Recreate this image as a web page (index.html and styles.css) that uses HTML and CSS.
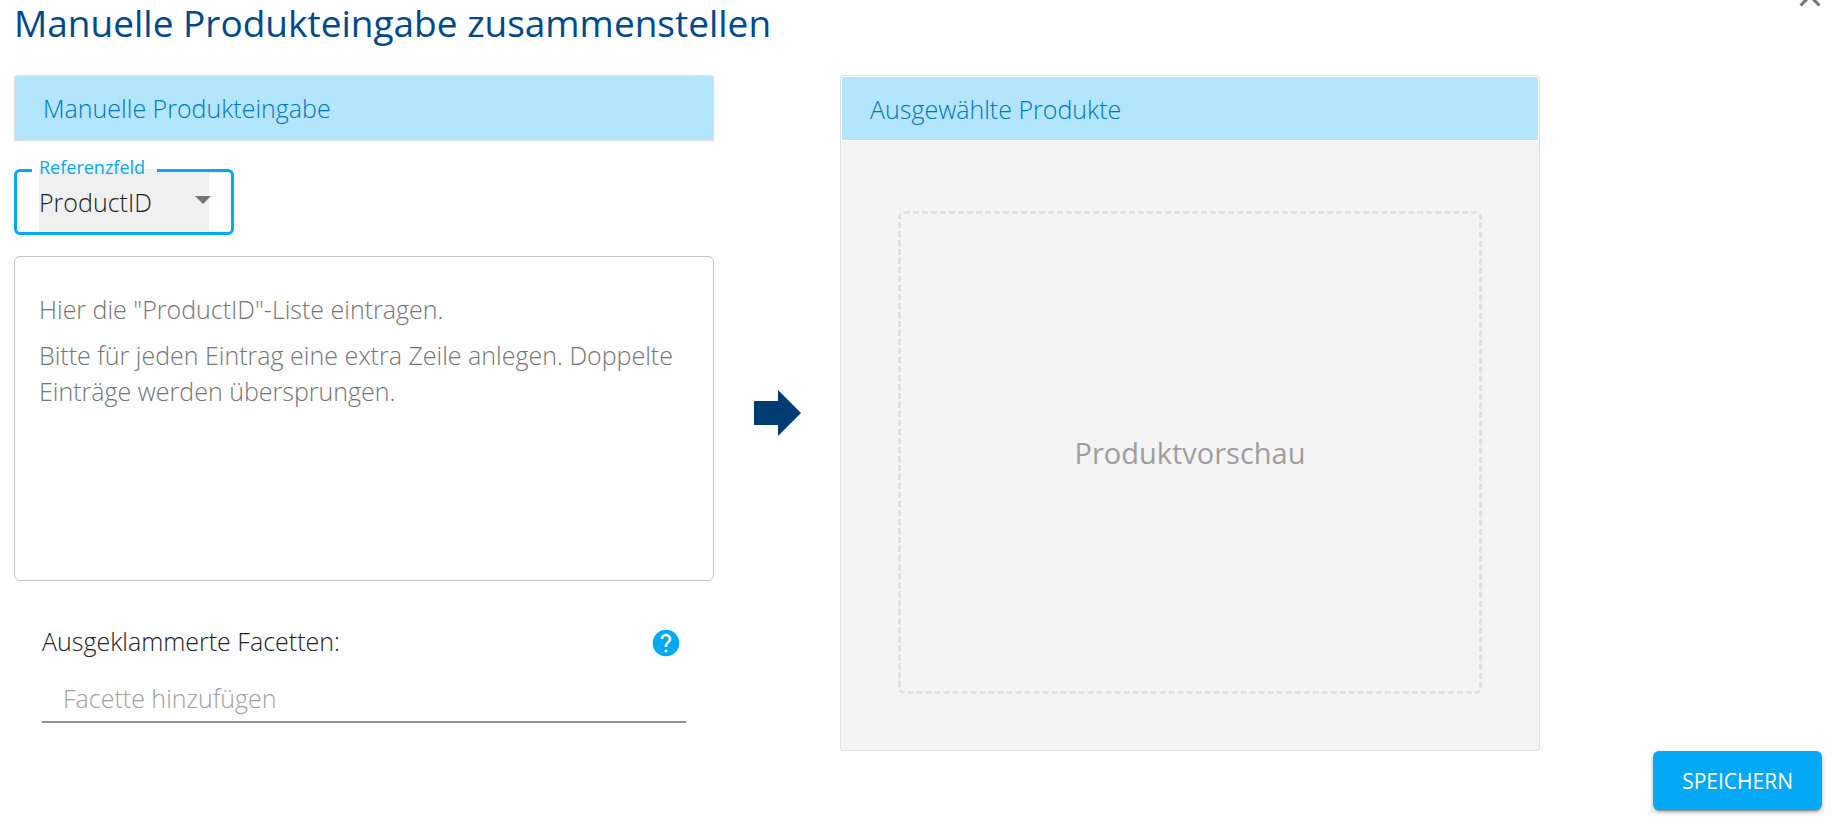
FILE: index.html
```html
<!DOCTYPE html>
<html lang="de">
<head>
  <meta charset="UTF-8" />
  <meta name="viewport" content="width=device-width, initial-scale=1.0" />
  <title>Manuelle Produkteingabe zusammenstellen</title>
  <link rel="stylesheet" href="styles.css">
</head>
<body>
  <main class="dialog">
    <header class="dialog-header">
      <h1>Manuelle Produkteingabe zusammenstellen</h1>
      <button type="button" class="close" aria-label="Schließen">
        <svg viewBox="0 0 24 24" width="36" height="36"><path d="M19 6.41 17.59 5 12 10.59 6.41 5 5 6.41 10.59 12 5 17.59 6.41 19 12 13.41 17.59 19 19 17.59 13.41 12z" /></svg>
      </button>
    </header>

    <div class="columns">
      <section class="input-panel">
        <h2 class="panel-title">Manuelle Produkteingabe</h2>

        <div class="select-field">
          <select id="refField">
            <option>ProductID</option>
          </select>
          <svg class="caret" viewBox="0 0 16 8" width="16" height="8"><path d="M0 0h16L8 8z" /></svg>
          <fieldset class="outline" aria-hidden="true"><legend></legend></fieldset>
          <label for="refField">Referenzfeld</label>
        </div>

        <div class="list-field">
          <textarea id="productList" aria-labelledby="listHint"></textarea>
          <label for="productList" id="listHint" class="hint">
            <span>Hier die "ProductID"-Liste eintragen.</span>
            <span>Bitte für jeden Eintrag eine extra Zeile anlegen. Doppelte Einträge werden übersprungen.</span>
          </label>
        </div>

        <div class="facets">
          <div class="facets-head">
            <label for="facet">Ausgeklammerte Facetten:</label>
            <button type="button" class="help" aria-label="Hilfe">
              <svg viewBox="0 0 24 24" width="32" height="32"><path d="M12 2C6.48 2 2 6.48 2 12s4.48 10 10 10 10-4.480 10-10S17.520 2 12 2zm1 17h-2v-2h2v2zm2.070-7.750-.9.920C13.450 12.900 13 13.500 13 15h-2v-.5c0-1.100.45-2.100 1.170-2.830l1.240-1.260c.37-.36.59-.86.59-1.410 0-1.100-.9-2-2-2s-2 .9-2 2H8c0-2.210 1.790-4 4-4s4 1.790 4 4c0 .88-.36 1.680-.93 2.250z" /></svg>
            </button>
          </div>
          <input type="text" id="facet" placeholder="Facette hinzufügen" />
        </div>
      </section>

      <button type="button" class="transfer" aria-label="Produkte übernehmen">
        <svg viewBox="0 0 47 46" width="47" height="46"><path d="M0 11h24V0l23 23-23 23V35H0z" /></svg>
      </button>

      <section class="preview-panel">
        <h2 class="panel-title">Ausgewählte Produkte</h2>
        <div class="preview">Produktvorschau</div>
      </section>
    </div>

    <footer class="actions">
      <button type="button" class="save">SPEICHERN</button>
    </footer>
  </main>
</body>
</html>
```
FILE: styles.css
```css
* { box-sizing: border-box; }
body { margin: 0; font-family: "Open Sans", sans-serif; font-size: 25px; font-weight: 350; line-height: 36px; color: #212121; background: #fefefe; }
button, input, select, textarea { font: inherit; color: inherit; }
button { border: none; background: none; padding: 0; cursor: pointer; }
svg { display: block; fill: currentColor; }

.dialog { padding: 0 11px 16px 14px; }
.dialog-header { display: flex; justify-content: space-between; align-items: flex-start; height: 75px; }
h1 { margin: 0; font-size: 37px; font-weight: 380; line-height: 46px; color: #004a8c; }
.close { color: #757575; margin-top: -22px; margin-right: -6px; }

.columns { display: grid; grid-template-columns: minmax(0, 700px) 126px minmax(0, 700px); }
.panel-title {
  margin: 0; padding: 14px 28px; border: 1px solid #e0e0e0; border-radius: 3px 3px 0 0;
  background: #b3e5fc; color: #0277bd; font-size: 25px; font-weight: 350; line-height: 36px;
}

.select-field { position: relative; width: 220px; height: 66px; margin-top: 28px; padding: 0 25px; }
.select-field select {
  display: block; width: 100%; height: 64px; padding: 2px 0 0; border: none; outline: none;
  appearance: none; background: #f0f0f0;
}
.select-field label { position: absolute; top: -14px; left: 25px; font-size: 18px; font-weight: 400; line-height: 24px; color: #03a9f4; }
.caret { position: absolute; top: 27px; right: 23px; color: #757575; pointer-events: none; }
.outline { position: absolute; inset: 0; margin: 0; padding: 0 15px; border: 3px solid #03a9f4; border-radius: 6px; pointer-events: none; }
.outline legend { width: 125px; height: 3px; padding: 0; }

.list-field { position: relative; margin-top: 21px; }
.list-field textarea {
  display: block; width: 100%; height: 325px; padding: 34px 24px; resize: none;
  border: 1px solid #c4c4c4; border-radius: 6px; background: transparent;
}
/* two-paragraph placeholder */
.hint { position: absolute; top: 35px; left: 25px; right: 25px; display: flex; flex-direction: column; gap: 10px; color: #757575; pointer-events: none; }
.list-field textarea:focus + .hint { visibility: hidden; }

.facets { margin: 42px 28px 0; }
.facets-head { display: flex; justify-content: space-between; align-items: flex-end; }
.help { color: #03a9f4; margin-right: 4px; }
.facets input { display: block; width: 100%; height: 64px; padding: 18px 21px 2px; border: none; border-bottom: 2px solid #949494; background: transparent; outline: none; }
.facets input::placeholder { color: #a0a0a0; opacity: 1; }

.transfer { align-self: center; justify-self: center; color: #003b71; }

.preview-panel { display: flex; flex-direction: column; min-height: 676px; border: 1px solid #e0e0e0; border-radius: 3px; background: #f4f4f4; }
.preview-panel .panel-title { padding: 14px 28px 13px; border-color: #fff; }
.preview {
  flex: 1; display: flex; align-items: center; justify-content: center;
  margin: 70px 57px 56px; border: 3px dashed #e0e0e0; border-radius: 6px;
  font-size: 29px; font-weight: 400; color: #9e9e9e;
}

.actions { display: flex; justify-content: flex-end; }
.save {
  height: 59px; padding: 0 29px; border-radius: 6px; background: #03a9f4; color: #fff;
  font-size: 21px; font-weight: 400;
  box-shadow: 0 3px 2px -2px rgba(0,0,0,0.3), 0 2px 4px rgba(0,0,0,0.3);
}
```
